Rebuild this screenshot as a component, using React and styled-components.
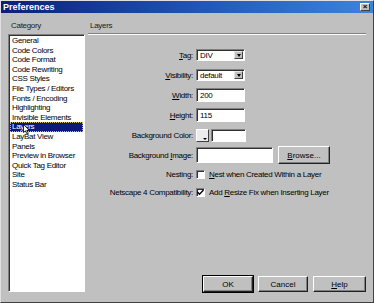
import styled, { createGlobalStyle } from "styled-components"

const Global = createGlobalStyle`
  body { margin: 0; background: #c0c0c0; }
  * { box-sizing: border-box; }
`

const Window = styled.div`
  width: 374px;
  height: 303px;
  background: #c0c0c0;
  border: 1px solid;
  border-color: #e0e0e0 #404040 #404040 #e0e0e0;
  display: flex;
  flex-direction: column;
  font-family: "Liberation Sans", Arial, sans-serif;
  font-size: 8px;
  letter-spacing: -0.3px;
  color: #000;
`

const TitleBar = styled.div`
  height: 12px;
  display: flex;
  align-items: center;
  justify-content: space-between;
  padding: 0 3px 0 2px;
  background: linear-gradient(to right, #0a1f78, #2a66c8 70%, #3d84d8);
  color: #fff;
  font-weight: bold;
  font-size: 9px;
  letter-spacing: 0;
`

const CloseBtn = styled.div`
  width: 10px;
  height: 8px;
  background: #c0c0c0;
  border: 1px solid;
  border-color: #fff #404040 #404040 #fff;
  color: #000;
  font-size: 8px;
  line-height: 6px;
  text-align: center;
`

const Body = styled.div`
  flex: 1;
  display: flex;
  gap: 3px;
  padding: 8px 7px 10px 7px;
  min-height: 0;
`

const LeftCol = styled.div`
  width: 77px;
  display: flex;
  flex-direction: column;
`

const Caption = styled.div`
  height: 10px;
  line-height: 10px;
  padding-left: ${p => p.$indent || 2}px;
  color: #202020;
`

const List = styled.div`
  position: relative;
  flex: 1;
  margin-top: 3px;
  background: #fff;
  border: 1px solid;
  border-color: #808080 #fff #fff #808080;
  box-shadow: inset 1px 1px #303030;
  padding: 1px 1px 0 1px;
`

const Item = styled.div`
  height: 9.6px;
  line-height: 9.6px;
  padding-left: 2px;
  white-space: nowrap;
  background: ${p => (p.$sel ? "#0a1a78" : "transparent")};
  color: ${p => (p.$sel ? "#fff" : "#000")};
  outline: ${p => (p.$sel ? "1px dotted #c8c070" : "none")};
  outline-offset: -1px;
`

const Cursor = styled.svg`
  position: absolute;
  left: 14px;
  top: 89px;
`

const RightCol = styled.div`
  flex: 1;
  display: flex;
  flex-direction: column;
`

const Separator = styled.div`
  margin-top: 2px;
  border-top: 1px solid #808080;
  border-bottom: 1px solid #fff;
`

const Form = styled.div`
  margin-top: 10px;
  display: grid;
  grid-template-columns: 105px 1fr;
  grid-template-rows: 20px 20px 20px 20px 20px 20px 19px 16px;
  column-gap: 3px;
  align-items: center;
`

const Label = styled.div`
  text-align: right;
  white-space: nowrap;
`

const Controls = styled.div`
  display: flex;
  align-items: center;
  gap: ${p => p.$gap || 0}px;
`

const Sunken = styled.div`
  width: ${p => p.$w}px;
  height: ${p => p.$h}px;
  background: #fff;
  border: 1px solid;
  border-color: #808080 #fff #fff #808080;
  box-shadow: inset 1px 1px #303030;
  display: flex;
  align-items: center;
  padding-left: 3px;
`

const SelectBox = styled(Sunken)`
  justify-content: space-between;
  padding: 1px 1px 1px 3px;
`

const ArrowBtn = styled.div`
  width: 9px;
  height: 100%;
  background: #c0c0c0;
  border: 1px solid;
  border-color: #e8e8e8 #404040 #404040 #e8e8e8;
  display: flex;
  align-items: center;
  justify-content: center;
  &::after {
    content: "";
    border-left: 2.5px solid transparent;
    border-right: 2.5px solid transparent;
    border-top: 3px solid #000;
  }
`

const Swatch = styled.div`
  position: relative;
  width: 13px;
  height: 13px;
  background: #ececec;
  border: 1px solid;
  border-color: #fff #404040 #404040 #fff;
  &::after {
    content: "";
    position: absolute;
    right: 1px;
    bottom: 1px;
    border-left: 2px solid transparent;
    border-right: 2px solid transparent;
    border-top: 2px solid #000;
  }
`

const Button = styled.button`
  width: ${p => p.$w || 50}px;
  height: ${p => p.$h || 16}px;
  padding: 0;
  background: #c0c0c0;
  font: inherit;
  color: #000;
  border: 1px solid;
  border-color: #fff #202020 #202020 #fff;
  box-shadow: inset -1px -1px #808080${p => (p.$def ? ", 0 0 0 1px #000" : "")};
`

const Check = styled.div`
  width: 9px;
  height: 9px;
  background: #fff;
  border: 1px solid;
  border-color: #808080 #fff #fff #808080;
  box-shadow: inset 1px 1px #303030;
  display: flex;
  align-items: center;
  justify-content: center;
`

const Footer = styled.div`
  margin-top: auto;
  display: flex;
  justify-content: flex-end;
  gap: 5px;
`

const items = [
  "General", "Code Colors", "Code Format", "Code Rewriting", "CSS Styles",
  "File Types / Editors", "Fonts / Encoding", "Highlighting", "Invisible Elements",
  "Layers", "LayBat View", "Panels", "Preview in Browser", "Quick Tag Editor",
  "Site", "Status Bar",
]

const Key = ({ children }) => <u>{children}</u>

export default function App() {
  return (
    <Window>
      <Global />
      <TitleBar>
        <span>Preferences</span>
        <CloseBtn>×</CloseBtn>
      </TitleBar>
      <Body>
        <LeftCol>
          <Caption $indent={3}>Category</Caption>
          <List>
            {items.map(it => (
              <Item key={it} $sel={it === "Layers"}>{it}</Item>
            ))}
            <Cursor width="7" height="11" viewBox="0 0 7 11">
              <path d="M0.5 0.5 L0.5 8.5 L2.5 6.8 L4 10 L5.3 9.4 L3.8 6.3 L6.3 6.3 Z" fill="#fff" stroke="#000" strokeWidth="0.8" />
            </Cursor>
          </List>
        </LeftCol>
        <RightCol>
          <Caption>Layers</Caption>
          <Separator />
          <Form>
            <Label><Key>T</Key>ag:</Label>
            <SelectBox $w={49} $h={12}>DIV<ArrowBtn /></SelectBox>

            <Label><Key>V</Key>isibility:</Label>
            <SelectBox $w={49} $h={12}>default<ArrowBtn /></SelectBox>

            <Label><Key>W</Key>idth:</Label>
            <Sunken $w={49} $h={14}>200</Sunken>

            <Label><Key>H</Key>eight:</Label>
            <Sunken $w={49} $h={14}>115</Sunken>

            <Label>Background Color:</Label>
            <Controls $gap={2}>
              <Swatch />
              <Sunken $w={35} $h={13} />
            </Controls>

            <Label>Background <Key>I</Key>mage:</Label>
            <Controls $gap={5}>
              <Sunken $w={77} $h={16} />
              <Button $w={52} $h={18}><Key>B</Key>rowse...</Button>
            </Controls>

            <Label>Nesting:</Label>
            <Controls $gap={4}>
              <Check />
              <span><Key>N</Key>est when Created Within a Layer</span>
            </Controls>

            <Label>Netscape 4 Compatibility:</Label>
            <Controls $gap={4}>
              <Check>
                <svg width="7" height="7" viewBox="0 0 7 7">
                  <path d="M0.5 3 L2.5 5.2 L6.5 1" fill="none" stroke="#000" strokeWidth="1.4" />
                </svg>
              </Check>
              <span>Add <Key>R</Key>esize Fix when Inserting Layer</span>
            </Controls>
          </Form>
          <Footer>
            <Button $def>OK</Button>
            <Button>Cancel</Button>
            <Button $w={53}><Key>H</Key>elp</Button>
          </Footer>
        </RightCol>
      </Body>
    </Window>
  )
}
